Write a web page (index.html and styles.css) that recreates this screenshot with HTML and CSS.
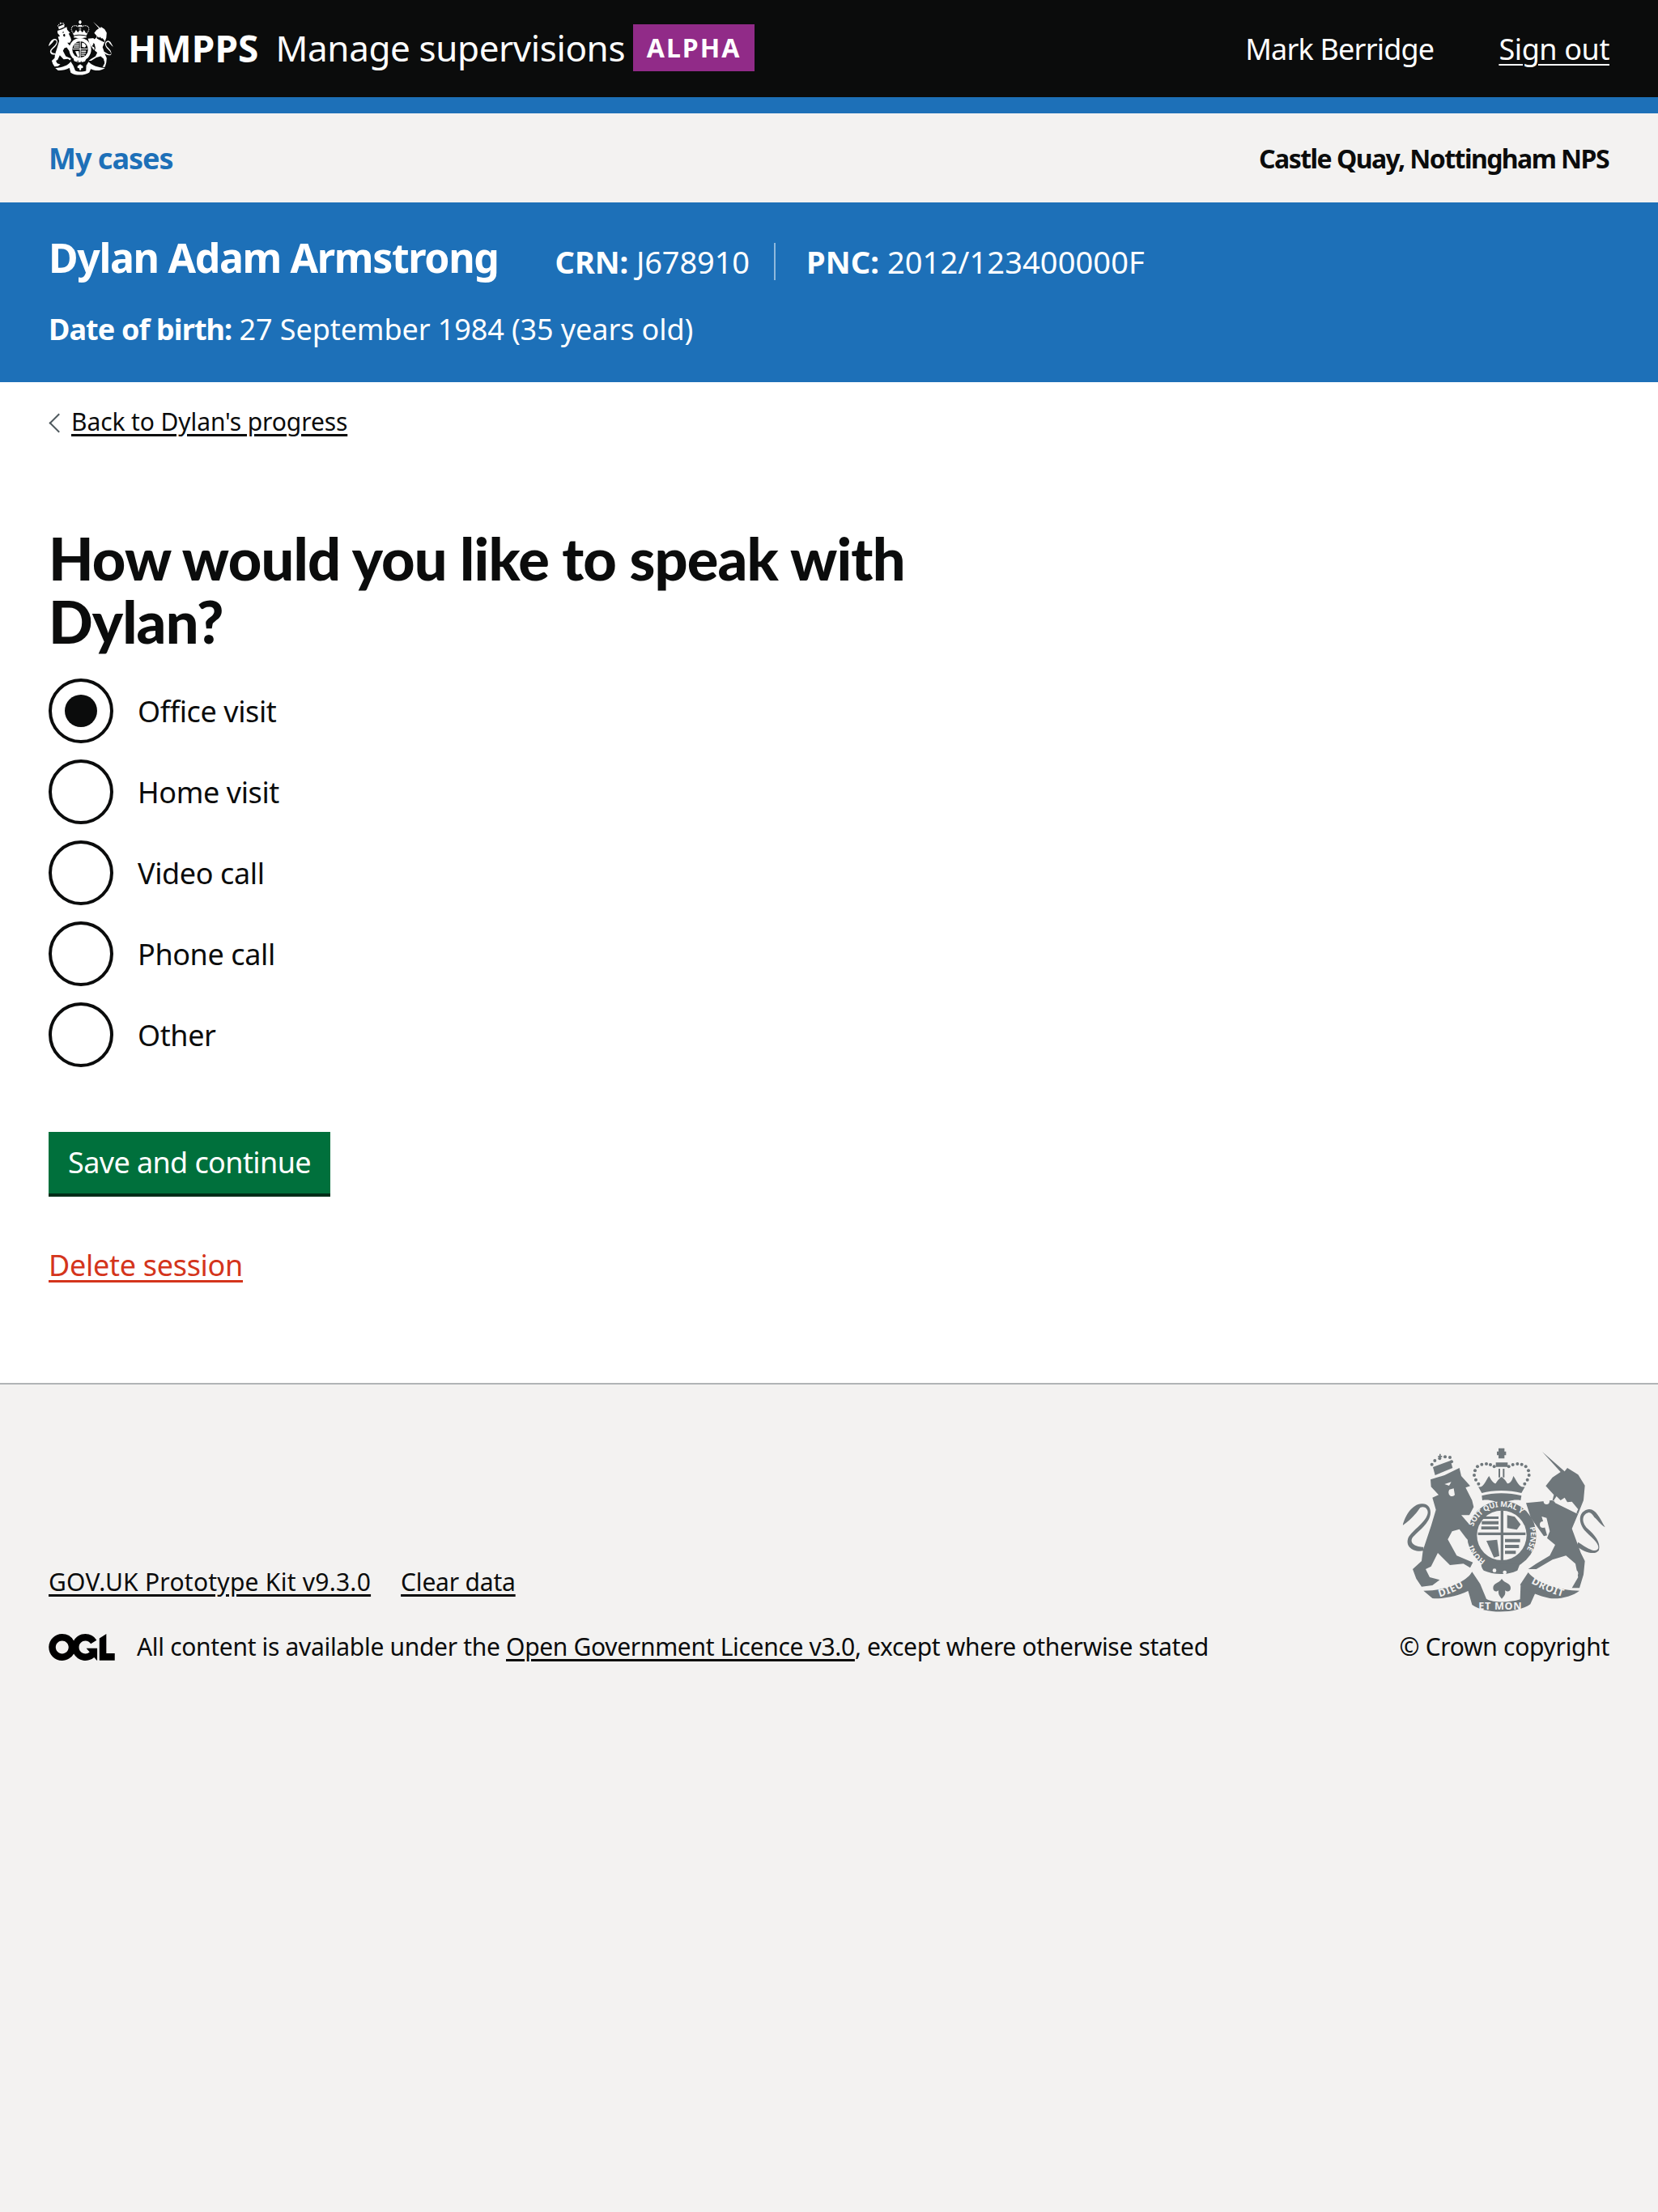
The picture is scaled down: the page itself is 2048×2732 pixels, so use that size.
FILE: index.html
```html
<!DOCTYPE html>
<html lang="en">
<head>
<meta charset="utf-8">
<title>How would you like to speak with Dylan?</title>
<link rel="stylesheet" href="styles.css">
</head>
<body>
<svg class="defs" width="0" height="0" aria-hidden="true">
  <symbol id="arms" viewBox="95 90 752 612" preserveAspectRatio="none">
    <g class="ink">
      <!-- lion -->
      <path d="M198 208 L250 192 L305 165 L312 195 L345 232 L328 238 L352 285 L358 310 L342 340 L312 340 L340 372 L368 400 L372 440 L352 448 L330 425 L305 392 L278 400 L262 430 L295 490 L355 515 L345 535 L320 520 L270 525 L225 480 L200 530 L180 540 L195 570 L232 580 L205 600 L165 605 L145 575 L132 540 L165 510 L170 470 L200 380 L218 320 L205 275 L228 265 L200 235 Z"/>
      <path d="M95 378 C105 340 130 300 165 298 C185 296 198 310 198 330 C198 370 150 400 130 425 C120 445 145 458 172 458 L172 472 C130 478 105 455 115 425 C130 395 185 365 188 330 C188 315 175 305 160 312 C150 325 135 350 95 378 Z"/>
      <!-- lion crown -->
      <path d="M207 162 L272 138 L280 165 L215 192 Z"/>
      <circle cx="203" cy="152" r="6"/><circle cx="214" cy="138" r="6"/><circle cx="232" cy="130" r="6"/><circle cx="252" cy="124" r="6"/><circle cx="270" cy="126" r="6"/><circle cx="276" cy="142" r="6"/>
      <path d="M226 120 h5 v-7 h5 v7 h5 v5 h-15 z"/>
      <!-- royal crown -->
      <path d="M450 92 h22 v12 h6 v14 h-6 v12 h-22 v-12 h-6 v-14 h6 z"/>
      <path d="M440 145 h44 v16 h-44 z M450 168 h6 v32 h-6 z M466 168 h6 v32 h-6 z"/>
      <path d="M375 235 C395 240 400 215 415 195 C425 215 435 225 440 222 C445 215 450 205 461 198 C472 205 478 215 482 222 C490 225 500 215 505 195 C520 215 525 240 548 235 L535 258 C490 246 430 246 388 258 Z"/>
      <path d="M388 268 C430 256 490 256 535 268 L532 285 C500 280 490 292 460 292 C430 292 420 280 390 285 Z"/>
      <circle cx="363" cy="175" r="6"/><circle cx="372" cy="160" r="6"/><circle cx="388" cy="152" r="6"/><circle cx="405" cy="150" r="6"/><circle cx="420" cy="153" r="6"/><circle cx="434" cy="160" r="6"/>
      <circle cx="360" cy="192" r="6"/><circle cx="366" cy="209" r="6"/><circle cx="376" cy="224" r="6"/>
      <circle cx="488" cy="160" r="6"/><circle cx="503" cy="153" r="6"/><circle cx="520" cy="150" r="6"/><circle cx="536" cy="152" r="6"/><circle cx="551" cy="160" r="6"/><circle cx="561" cy="175" r="6"/>
      <circle cx="563" cy="192" r="6"/><circle cx="557" cy="209" r="6"/><circle cx="547" cy="224" r="6"/>
      <!-- garter and shield -->
      <circle cx="462" cy="415" r="128"/>
      <path d="M395 505 L440 500 L445 520 L530 520 L520 545 C480 565 430 560 395 545 C382 530 385 515 395 505 Z"/>
      <!-- unicorn -->
      <path d="M612 105 L695 178 L705 165 L745 190 L770 230 L765 285 L745 335 L705 305 L650 285 L655 265 L625 232 L650 200 L680 180 Z"/>
      <path d="M648 285 L745 335 L722 390 L755 480 L770 510 L765 560 L750 610 L722 610 L745 570 L735 520 L700 490 L650 505 L590 540 L560 540 L590 520 L640 490 L660 450 L630 425 L640 400 L628 350 L610 345 L630 415 L618 418 L570 350 L552 295 L600 290 Z"/>
      <path d="M745 440 C790 470 812 480 820 462 C822 440 790 420 768 395 C745 365 745 325 785 318 C810 316 825 350 845 385 C825 372 815 355 805 348 C800 340 795 332 785 330 C760 335 755 365 780 390 C805 412 830 440 822 470 C805 492 765 475 740 455 Z"/>
      <!-- ribbon -->
      <path d="M172 620 C250 620 330 590 352 550 L382 595 C372 610 350 618 335 622 C300 640 240 652 205 648 Z"/>
      <path d="M335 612 C350 612 365 605 382 595 L405 650 C430 665 490 665 530 652 L532 598 C545 610 570 618 590 620 L568 670 C520 705 400 708 352 672 Z"/>
      <path d="M560 552 C590 592 680 620 750 620 C725 640 680 652 640 648 C600 640 560 625 530 598 Z"/>
      <path d="M462 576 C450 595 430 590 430 610 C430 625 445 625 450 618 C448 635 455 640 462 650 C470 640 478 635 474 618 C480 625 495 625 495 610 C495 590 474 595 462 576 Z"/>
    </g>
    <g class="cut">
      <circle cx="462" cy="415" r="92"/>
      <circle cx="435" cy="545" r="7"/><circle cx="473" cy="552" r="7"/>
      <path d="M250 225 l25 -8 l-8 14 z M268 245 a12 14 0 0 0 20 20 l-4 -24 z"/>
      <circle cx="628" cy="289" r="11"/><circle cx="615" cy="375" r="12"/><circle cx="748" cy="398" r="10"/><circle cx="710" cy="525" r="11"/><circle cx="733" cy="556" r="12"/><circle cx="783" cy="551" r="11"/><circle cx="817" cy="530" r="15"/>
      <path d="M655 285 L665 270 L680 285 L695 275 L705 292 L722 290 L745 318 L738 333 L660 295 Z"/>
    </g>
    <g class="ink">
      <path d="M458 322 h10 v198 h-10 z M374 404 h176 v10 h-176 z"/>
      <path d="M392 345 h58 v9 h-58 z M388 362 h62 v12 h-62 z M386 382 h64 v11 h-64 z"/>
      <path d="M482 340 l28 6 l22 28 l-14 20 l-36 -6 z"/>
      <path d="M405 435 l40 -4 l8 60 l-20 6 z"/>
      <path d="M474 428 h56 v12 h-56 z M474 450 h52 v12 h-52 z M474 472 h40 v12 h-40 z"/>
    </g>
  </symbol>
</svg>

<header class="masthead">
  <div class="brand">
    <svg class="brand-arms"><use href="#arms"/></svg>
    <span class="brand-org">HMPPS</span>
    <span class="brand-service">Manage supervisions</span>
    <strong class="phase-tag">ALPHA</strong>
  </div>
  <div class="account">
    <span class="account-name">Mark Berridge</span>
    <a class="account-link" href="#">Sign out</a>
  </div>
</header>

<nav class="subnav">
  <a class="subnav-link" href="#">My cases</a>
  <span class="subnav-team">Castle Quay, Nottingham NPS</span>
</nav>

<section class="person">
  <div class="person-top">
    <h2 class="person-name">Dylan Adam Armstrong</h2>
    <p class="person-id person-crn"><b>CRN:</b> J678910</p>
    <p class="person-id person-pnc"><b>PNC:</b> 2012/123400000F</p>
  </div>
  <p class="person-dob"><b>Date of birth:</b> 27 September 1984 (35 years old)</p>
</section>

<main class="content">
  <a class="back-link" href="#">Back to Dylan's progress</a>
  <form class="question">
    <fieldset class="fieldset">
      <legend class="question-title">How would you like to speak with Dylan?</legend>
      <div class="radios">
        <label class="radio"><input class="radio-input" type="radio" name="how" checked><span class="radio-mark"></span><span class="radio-label">Office visit</span></label>
        <label class="radio"><input class="radio-input" type="radio" name="how"><span class="radio-mark"></span><span class="radio-label">Home visit</span></label>
        <label class="radio"><input class="radio-input" type="radio" name="how"><span class="radio-mark"></span><span class="radio-label">Video call</span></label>
        <label class="radio"><input class="radio-input" type="radio" name="how"><span class="radio-mark"></span><span class="radio-label">Phone call</span></label>
        <label class="radio"><input class="radio-input" type="radio" name="how"><span class="radio-mark"></span><span class="radio-label">Other</span></label>
      </div>
    </fieldset>
    <button class="button" type="button">Save and continue</button>
  </form>
  <a class="delete-link" href="#">Delete session</a>
</main>

<footer class="footer">
  <div class="footer-main">
    <ul class="footer-links">
      <li><a class="footer-link footer-kit" href="#">GOV.UK Prototype Kit v9.3.0</a></li>
      <li><a class="footer-link footer-clear" href="#">Clear data</a></li>
    </ul>
    <div class="licence">
      <svg class="ogl" viewBox="0 0 483.2 195.7" aria-hidden="true"><path d="M421.5 142.8V.1l-50.7 32.3v161.1h112.4v-50.7zm-122.3-9.6A47.12 47.12 0 0 1 221 97.8c0-26 21.1-47.1 47.1-47.1 16.7 0 31.4 8.7 39.7 21.8l42.7-27.2A97.63 97.63 0 0 0 268.1 0c-36.5 0-68.3 20.1-85.1 49.7A98 98 0 0 0 97.8 0C43.9 0 0 43.9 0 97.8s43.9 97.8 97.8 97.8c36.5 0 68.3-20.1 85.1-49.7a97.76 97.76 0 0 0 149.6 25.4l19.4 22.2h3v-87.8h-80l24.3 27.5zM97.8 145c-26 0-47.1-21.1-47.1-47.1s21.1-47.1 47.1-47.1 47.2 21 47.2 47S123.8 145 97.8 145"/></svg>
      <span class="licence-text">All content is available under the <a class="footer-link" href="#">Open Government Licence v3.0</a>, except where otherwise stated</span>
    </div>
  </div>
  <div class="footer-crown">
    <svg class="footer-arms" viewBox="95 90 752 612">
      <use href="#arms" x="95" y="90" width="752" height="612"/>
      <defs>
        <path id="garter-top" d="M352 400 A112 112 0 0 1 572 400"/>
        <path id="garter-right" d="M566 385 A106 106 0 0 1 530 495"/>
        <path id="garter-left" d="M402 508 A110 110 0 0 1 352 440"/>
        <path id="scroll-left" d="M232 643 C270 632 310 614 345 587"/>
        <path id="scroll-right" d="M570 592 C610 614 650 632 700 646"/>
      </defs>
      <g class="motto">
        <text class="motto-small"><textPath href="#garter-top" startOffset="18">SOIT QUI MAL Y</textPath></text>
        <text class="motto-small"><textPath href="#garter-right">PENSE</textPath></text>
        <text class="motto-small"><textPath href="#garter-left">HONI</textPath></text>
        <text class="motto-big"><textPath href="#scroll-left">DIEU</textPath></text>
        <text class="motto-big"><textPath href="#scroll-right">DROIT</textPath></text>
        <text class="motto-big" x="376" y="690">ET MON</text>
      </g>
    </svg>
    <a class="crown-link" href="#">© Crown copyright</a>
  </div>
</footer>
</body>
</html>
```

FILE: styles.css
```css
* { box-sizing: border-box; }
html, body { margin: 0; padding: 0; }
body {
  min-height: 2732px;
  display: flex;
  flex-direction: column;
  background: #f3f2f1;
  color: #0b0c0c;
  font-family: "Noto Sans", "Liberation Sans", sans-serif;
}
a { color: inherit; }
p, h1, h2, ul { margin: 0; padding: 0; }
b { font-weight: 700; }
.defs { position: absolute; }

/* crest */
.ink { fill: var(--crest-ink); }
.cut { fill: var(--crest-cut); }
.motto { fill: #f3f2f1; font-family: "Noto Sans", sans-serif; font-weight: 700; }
.motto-small { font-size: 28px; }
.motto-big { font-size: 38px; letter-spacing: 2px; }

/* masthead */
.masthead {
  height: 140px;
  background: #0b0c0c;
  border-bottom: 20px solid #1d70b8;
  padding: 0 60px;
  display: flex;
  justify-content: space-between;
  color: #fff;
}
.brand { display: flex; align-items: center; padding-bottom: 2px; }
.brand-arms { width: 80px; height: 68px; --crest-ink: #fff; --crest-cut: #0b0c0c; }
.brand-org { margin-left: 18px; font-size: 46px; font-weight: 700; letter-spacing: 0.1px; line-height: 60px; }
.brand-service { margin-left: 21px; font-size: 44px; letter-spacing: -0.4px; line-height: 60px; }
.phase-tag {
  margin-left: 10px;
  width: 150px;
  height: 58px;
  background: #912b88;
  font-size: 32px;
  line-height: 58px;
  text-align: center;
  letter-spacing: 2px;
}
.account { display: flex; align-items: center; gap: 80px; font-size: 36px; letter-spacing: -0.8px; }
.account-link { letter-spacing: -0.4px; text-underline-offset: 5px; text-decoration-thickness: 2px; }

/* sub navigation */
.subnav {
  height: 110px;
  padding: 0 60px;
  display: flex;
  justify-content: space-between;
  align-items: center;
  font-weight: 700;
}
.subnav-link { font-size: 36px; color: #1d70b8; text-decoration: none; letter-spacing: -1px; }
.subnav-team { margin-right: 1px; font-size: 32px; letter-spacing: -1.55px; }

/* person banner */
.person {
  height: 222px;
  background: #1d70b8;
  color: #fff;
  padding: 35px 60px 0;
}
.person-top { display: flex; align-items: flex-start; height: 72px; }
.person-name { font-size: 50px; font-weight: 700; letter-spacing: -1.35px; line-height: 66px; }
.person-id { margin-top: 15px; font-size: 38px; line-height: 46px; }
.person-crn { margin-left: 70px; padding-right: 30px; border-right: 2px solid #8eb8dc; letter-spacing: -0.1px; }
.person-pnc { margin-left: 38px; letter-spacing: 0.1px; }
.person-dob { margin-top: 25px; font-size: 36px; letter-spacing: -0.1px; line-height: 50px; }
.person-dob b { letter-spacing: -0.9px; }

/* content */
.content {
  background: #fff;
  height: 1236px;
  padding: 29px 60px 0;
  display: flex;
  flex-direction: column;
  align-items: flex-start;
}
.back-link {
  position: relative;
  margin-left: 28px;
  font-size: 30px;
  line-height: 40px;
  letter-spacing: -0.1px;
  text-underline-offset: 4px;
}
.back-link::before {
  content: "";
  position: absolute;
  left: -24px;
  top: 13px;
  width: 15px;
  height: 15px;
  border-left: 2px solid #505a5f;
  border-bottom: 2px solid #505a5f;
  transform: rotate(45deg);
}
.question { margin-top: 109px; }
.fieldset { margin: 0; padding: 0; border: 0; min-width: 0; }
.question-title {
  padding: 0;
  width: 1200px;
  font-family: "Lato", "Noto Sans", sans-serif;
  font-size: 72px;
  font-weight: 900;
  letter-spacing: -0.8px;
  line-height: 78px;
  margin-bottom: 32px;
}
.radios { display: flex; flex-direction: column; gap: 20px; }
.radio { display: flex; align-items: center; height: 80px; position: relative; }
.radio-input { position: absolute; opacity: 0; width: 80px; height: 80px; margin: 0; }
.radio-mark { width: 80px; height: 80px; border: 4px solid #0b0c0c; border-radius: 50%; background: #fff; flex: none; display: flex; align-items: center; justify-content: center; }
.radio-input:checked + .radio-mark::after { content: ""; width: 40px; height: 40px; border-radius: 50%; background: #0b0c0c; }
.radio-label { margin-left: 30px; font-size: 36px; letter-spacing: -0.4px; }
.button {
  display: block;
  margin: 80px 0 0;
  width: 348px;
  height: 80px;
  padding: 0 0 2px;
  border: 0;
  border-bottom: 4px solid #002d18;
  background: #00703c;
  color: #fff;
  font: inherit;
  font-size: 36px;
  letter-spacing: -0.6px;
}
.delete-link { margin-top: 60px; font-size: 36px; letter-spacing: -0.3px; color: #d4351c; text-underline-offset: 5px; }

/* footer */
.footer {
  border-top: 2px solid #b1b4b6;
  padding: 78px 60px 0;
  display: flex;
  justify-content: space-between;
  align-items: flex-end;
}
.footer-main { font-size: 30px; letter-spacing: -0.32px; }
.footer-links { list-style: none; display: flex; gap: 37px; margin-bottom: 40px; }
.footer-kit { letter-spacing: 0.25px; }
.footer-clear { letter-spacing: -0.2px; }
.footer-link { text-underline-offset: 4px; }
.licence { display: flex; align-items: center; }
.ogl { width: 82px; height: 33px; margin-right: 27px; flex: none; }
.licence-text { line-height: 40px; }
.footer-crown { display: flex; flex-direction: column; align-items: flex-end; font-size: 30px; letter-spacing: -0.3px; }
.footer-arms { width: 252px; height: 204px; margin: 0 4px 22px 0; --crest-ink: #6f777b; --crest-cut: #f3f2f1; }
.crown-link { text-decoration: none; line-height: 40px; }
```
